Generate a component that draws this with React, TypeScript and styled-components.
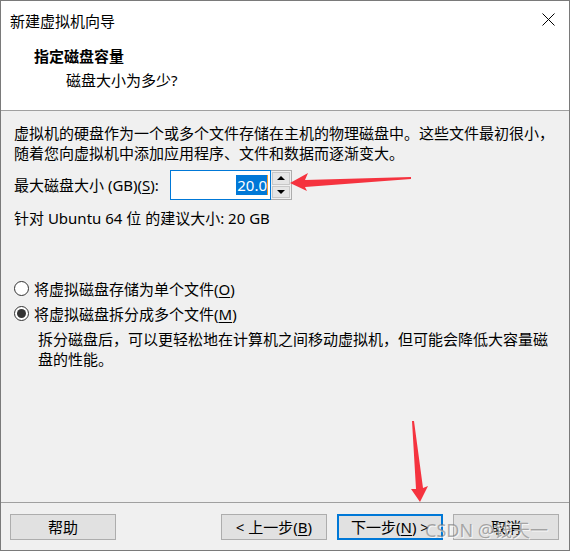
import React from "react";
import styled, { createGlobalStyle } from "styled-components";

const Global = createGlobalStyle`
  html, body { margin: 0; padding: 0; background: #ffffff; }
  body {
    font-family: "Noto Sans", "Noto Sans CJK SC", sans-serif;
    font-size: 15px;
    color: #000;
  }
  * { box-sizing: border-box; }
`;

const Window = styled.div`
  position: relative;
  width: 570px;
  height: 551px;
  border: 1px solid #7a7a7a;
  background: #f0f0f0;
  display: flex;
  flex-direction: column;
  overflow: hidden;
`;

const TitleBar = styled.div`
  height: 39px;
  background: #fff;
  display: flex;
  align-items: center;
  justify-content: space-between;
  padding: 0 14px 0 9px;
`;

const TitleText = styled.div`
  font-size: 15px;
  line-height: 20px;
  padding-top: 1px;
`;

const CloseBtn = styled.div`
  width: 14px;
  height: 14px;
  display: flex;
  align-items: center;
  justify-content: center;
  margin-top: -2px;
`;

const Header = styled.div`
  height: 71px;
  background: #fff;
  border-bottom: 1px solid #a0a0a0;
  padding: 6px 0 0 33px;
`;

const HeaderTitle = styled.div`
  font-weight: bold;
  font-size: 15px;
  line-height: 20px;
`;

const HeaderSub = styled.div`
  margin-top: 4px;
  padding-left: 32px;
  font-size: 15px;
  line-height: 20px;
`;

const Body = styled.div`
  flex: 1;
  padding: 12px 13px 0 13px;
  display: flex;
  flex-direction: column;
`;

const Para = styled.div<{ $indent?: number; $mt?: number }>`
  font-size: 15px;
  line-height: 20px;
  padding-left: ${(p) => p.$indent ?? 0}px;
  margin-top: ${(p) => p.$mt ?? 0}px;
`;

const SizeRow = styled.div`
  margin-top: 7px;
  height: 30px;
  display: flex;
  align-items: center;
`;

const SizeLabel = styled.div`
  width: 156px;
  line-height: 20px;
`;

const Key = styled.span`
  text-decoration: underline;
  text-underline-offset: 2px;
`;

const InputBox = styled.div`
  width: 101px;
  height: 30px;
  border: 1px solid #0078d7;
  background: #fff;
  display: flex;
  align-items: center;
  justify-content: flex-end;
  padding-right: 2px;
`;

const Selected = styled.span`
  background: #0078d7;
  color: #fff;
  line-height: 20px;
  padding: 0 0 0 1px;
`;

const Caret = styled.span`
  display: inline-block;
  width: 1px;
  height: 20px;
  background: #f39a2b;
`;

const Spinner = styled.div`
  width: 21px;
  height: 30px;
  border: 1px solid #adadad;
  border-left: none;
  background: #f0f0f0;
  display: flex;
  flex-direction: column;
  padding: 1px;
  gap: 1px;
`;

const SpinBtn = styled.div`
  flex: 1;
  border: 1px solid #c8c8c8;
  background: #e5e5e5;
  display: flex;
  align-items: center;
  justify-content: center;
`;

const Arrow = styled.div<{ $up?: boolean }>`
  width: 0;
  height: 0;
  border-left: 4px solid transparent;
  border-right: 4px solid transparent;
  ${(p) => (p.$up ? "border-bottom: 4px solid #000;" : "border-top: 4px solid #000;")}
`;

const RadioGroup = styled.div`
  margin-top: 48px;
  display: flex;
  flex-direction: column;
`;

const RadioRow = styled.div`
  height: 25px;
  display: flex;
  align-items: center;
  gap: 5px;
  padding-left: 0;
  line-height: 20px;
`;

const RadioCircle = styled.div<{ $checked?: boolean }>`
  width: 15px;
  height: 15px;
  border-radius: 50%;
  border: 1px solid #333;
  background: #fff;
  display: flex;
  align-items: center;
  justify-content: center;
  &::after {
    content: "";
    display: ${(p) => (p.$checked ? "block" : "none")};
    width: 9px;
    height: 9px;
    border-radius: 50%;
    background: #333;
  }
`;

const Footer = styled.div`
  height: 48px;
  border-top: 1px solid #a0a0a0;
  display: flex;
  align-items: flex-start;
  padding: 11px 10px 0 9px;
  position: relative;
`;

const Spacer = styled.div`
  flex: 1;
`;

const Button = styled.div<{ $focus?: boolean }>`
  width: 106px;
  height: 26px;
  background: #e1e1e1;
  border: ${(p) => (p.$focus ? "2px solid #0078d7" : "1px solid #adadad")};
  display: flex;
  align-items: center;
  justify-content: center;
  font-size: 15px;
  line-height: 20px;
  & + & {
    margin-left: 10px;
  }
`;

const Watermark = styled.div`
  position: absolute;
  left: 424px;
  top: 16px;
  font-family: "Noto Sans", "Noto Sans CJK SC", sans-serif;
  font-size: 18px;
  line-height: 22px;
  color: rgba(120, 120, 120, 0.6);
  text-shadow: 1px 1px 0 rgba(255, 255, 255, 0.7);
  white-space: nowrap;
  pointer-events: none;
`;

const Overlay = styled.svg`
  position: absolute;
  left: 0;
  top: 0;
  pointer-events: none;
`;

export default function App() {
  return (
    <>
      <Global />
      <Window>
        <TitleBar>
          <TitleText>新建虚拟机向导</TitleText>
          <CloseBtn>
            <svg width="13" height="13" viewBox="0 0 13 13">
              <path d="M0.5 0.5 L12.5 12.5 M12.5 0.5 L0.5 12.5" stroke="#000" strokeWidth="1" />
            </svg>
          </CloseBtn>
        </TitleBar>
        <Header>
          <HeaderTitle>指定磁盘容量</HeaderTitle>
          <HeaderSub>磁盘大小为多少?</HeaderSub>
        </Header>
        <Body>
          <Para>
            虚拟机的硬盘作为一个或多个文件存储在主机的物理磁盘中。这些文件最初很小，
            <br />
            随着您向虚拟机中添加应用程序、文件和数据而逐渐变大。
          </Para>
          <SizeRow>
            <SizeLabel>
              最大磁盘大小 (GB)(<Key>S</Key>):
            </SizeLabel>
            <InputBox>
              <Selected>20.0</Selected>
              <Caret />
            </InputBox>
            <Spinner>
              <SpinBtn>
                <Arrow $up />
              </SpinBtn>
              <SpinBtn>
                <Arrow />
              </SpinBtn>
            </Spinner>
          </SizeRow>
          <Para $mt={8}>针对 Ubuntu 64 位 的建议大小: 20 GB</Para>
          <RadioGroup>
            <RadioRow>
              <RadioCircle />
              <span>
                将虚拟磁盘存储为单个文件(<Key>O</Key>)
              </span>
            </RadioRow>
            <RadioRow>
              <RadioCircle $checked />
              <span>
                将虚拟磁盘拆分成多个文件(<Key>M</Key>)
              </span>
            </RadioRow>
          </RadioGroup>
          <Para $indent={24} $mt={3}>
            拆分磁盘后，可以更轻松地在计算机之间移动虚拟机，但可能会降低大容量磁
            <br />
            盘的性能。
          </Para>
        </Body>
        <Footer>
          <Button>帮助</Button>
          <Spacer />
          <Button>
            &lt; 上一步(<Key>B</Key>)
          </Button>
          <Button $focus>
            下一步(<Key>N</Key>) &gt;
          </Button>
          <Button>取消</Button>
          <Watermark>CSDN @钱天一</Watermark>
        </Footer>
        <Overlay width="570" height="551" viewBox="0 0 570 551">
          <polygon points="289,182 307,172 304,179 410,176 410,178 304,186 306,190" fill="#f5333f" />
          <polygon points="411,420 413,420 422,487 427,485 419,501 410,488 415,488" fill="#f5333f" />
        </Overlay>
      </Window>
    </>
  );
}
